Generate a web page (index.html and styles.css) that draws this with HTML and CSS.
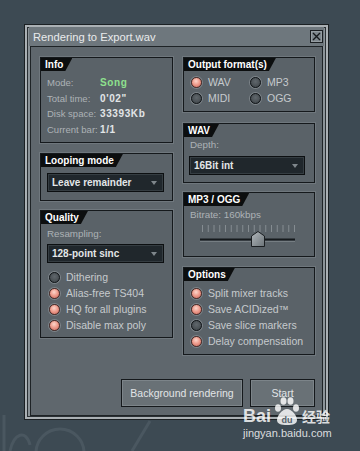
FILE: index.html
```html
<!doctype html>
<html lang="en">
<head>
    <meta charset="UTF-8">
    <meta name="viewport" content="width=device-width, initial-scale=1.0">
    <title>Rendering to Export.wav</title>
    <link rel="stylesheet" href="styles.css">
</head>
<body>
<svg class="bg-deco" width="180" height="36" viewBox="0 0 180 36">
    <path d="M4 0 V36" />
    <path d="M10 36 C 14 18, 26 14, 30 30" />
    <circle cx="60" cy="38" r="24" />
    <path d="M132 36 L 150 6" />
</svg>

<div class="window">
    <div class="title-bar">
        <span class="title">Rendering to Export.wav</span>
        <span class="close-btn">
            <svg width="9" height="9" viewBox="0 0 9 9"><path d="M1 1 L8 8 M8 1 L1 8" /></svg>
        </span>
    </div>

    <div class="panel">
        <div class="columns">
            <div class="col">
                <div class="group group-info">
                    <div class="tab">Info</div>
                    <div class="info-rows">
                        <div class="info-row"><span class="info-label">Mode:</span><span class="info-value green">Song</span></div>
                        <div class="info-row"><span class="info-label">Total time:</span><span class="info-value">0'02"</span></div>
                        <div class="info-row"><span class="info-label">Disk space:</span><span class="info-value">33393Kb</span></div>
                        <div class="info-row"><span class="info-label">Current bar:</span><span class="info-value">1/1</span></div>
                    </div>
                </div>

                <div class="group group-loop">
                    <div class="tab">Looping mode</div>
                    <div class="dropdown dd-loop"><span>Leave remainder</span><i class="arrow"></i></div>
                </div>

                <div class="group group-quality">
                    <div class="tab">Quality</div>
                    <div class="field-label">Resampling:</div>
                    <div class="dropdown dd-resample"><span>128-point sinc</span><i class="arrow"></i></div>
                    <div class="radio-list quality-list">
                        <div class="radio-row"><span class="radio"></span>Dithering</div>
                        <div class="radio-row"><span class="radio on"></span>Alias-free TS404</div>
                        <div class="radio-row"><span class="radio on"></span>HQ for all plugins</div>
                        <div class="radio-row"><span class="radio on"></span>Disable max poly</div>
                    </div>
                </div>
            </div>

            <div class="col">
                <div class="group group-output">
                    <div class="tab">Output format(s)</div>
                    <div class="format-grid">
                        <div class="radio-row"><span class="radio on"></span>WAV</div>
                        <div class="radio-row"><span class="radio"></span>MP3</div>
                        <div class="radio-row"><span class="radio"></span>MIDI</div>
                        <div class="radio-row"><span class="radio"></span>OGG</div>
                    </div>
                </div>

                <div class="group group-wav">
                    <div class="tab">WAV</div>
                    <div class="field-label depth-label">Depth:</div>
                    <div class="dropdown dd-depth"><span>16Bit int</span><i class="arrow"></i></div>
                </div>

                <div class="group group-mp3">
                    <div class="tab">MP3 / OGG</div>
                    <div class="field-label bitrate-label">Bitrate: 160kbps</div>
                    <svg class="slider" width="130" height="28" viewBox="0 0 130 28">
                        <g class="ticks">
                            <path d="M18.5 3 V10 M24.25 3 V10 M30 3 V10 M35.75 3 V10 M41.5 3 V10 M47.25 3 V10 M53 3 V10 M58.75 3 V10 M64.5 3 V10 M70.25 3 V10 M76 3 V10 M81.75 3 V10 M87.5 3 V10 M93.25 3 V10 M99 3 V10 M104.75 3 V10 M110.5 3 V10" />
                        </g>
                        <path class="track" d="M16 17.5 H111" />
                        <path class="track-hi" d="M16 19.5 H111" />
                        <defs>
                            <linearGradient id="thumb-g" x1="0" y1="0" x2="1" y2="1">
                                <stop offset="0" stop-color="#b3b9bd" />
                                <stop offset="1" stop-color="#6b7378" />
                            </linearGradient>
                        </defs>
                        <path class="thumb" d="M67.5 14 L74 9.5 L80.5 14 V24.5 H67.5 Z" fill="url(#thumb-g)" />
                    </svg>
                </div>

                <div class="group group-options">
                    <div class="tab">Options</div>
                    <div class="radio-list options-list">
                        <div class="radio-row"><span class="radio on"></span>Split mixer tracks</div>
                        <div class="radio-row"><span class="radio on"></span>Save ACIDized™</div>
                        <div class="radio-row"><span class="radio"></span>Save slice markers</div>
                        <div class="radio-row"><span class="radio on"></span>Delay compensation</div>
                    </div>
                </div>
            </div>
        </div>

        <div class="button-row">
            <div class="btn btn-bg">Background rendering</div>
            <div class="btn btn-start">Start</div>
        </div>
    </div>
</div>

<div class="watermark">
    <div class="wm-brand">
        <span class="wm-bai">Bai</span>
        <svg class="wm-paw" width="26" height="28" viewBox="0 0 26 28">
            <ellipse cx="4" cy="11" rx="3" ry="3.8" />
            <ellipse cx="9.5" cy="4" rx="3" ry="3.8" />
            <ellipse cx="16.5" cy="4" rx="3" ry="3.8" />
            <ellipse cx="22" cy="11" rx="3" ry="3.8" />
            <path d="M13 12 C 8 12, 3 19, 3 23 C 3 27, 7 28, 13 28 C 19 28, 23 27, 23 23 C 23 19, 18 12, 13 12 Z" />
            <text x="13" y="25.5" text-anchor="middle">du</text>
        </svg>
        <span class="wm-cn">经验</span>
    </div>
    <div class="wm-url">jingyan.baidu.com</div>
</div>
</body>
</html>
```

FILE: styles.css
```css
body {
    margin: 0;
    padding: 24px 0 0 24px;
    width: 360px;
    height: 451px;
    box-sizing: border-box;
    overflow: hidden;
    position: relative;
    background-color: #3d4a53;
    font-family: "Liberation Sans", Arial, sans-serif;
}

.bg-deco {
    position: absolute;
    left: 0;
    top: 415px;
    fill: none;
    stroke: #4a5760;
    stroke-width: 3;
}

/* window frame */
.window {
    position: relative;
    width: 305px;
    height: 396px;
    box-sizing: border-box;
    padding: 2px 4px 3px;
    border: 1px solid #1b2023;
    background-color: #8b9398;
    box-shadow: inset 0 0 0 2px #aab0b4, inset 0 0 0 3px #2a3034;
}
.title-bar {
    height: 19px;
    display: flex;
    align-items: center;
    justify-content: space-between;
    padding: 0 1px 0 4px;
    background-color: #6e777d;
}
.title {
    color: #e9ebec;
    font-size: 11.2px;
}
.close-btn {
    width: 13px;
    height: 13px;
    box-sizing: border-box;
    display: flex;
    align-items: center;
    justify-content: center;
    border: 1px solid #1b1f22;
    background-color: #7f888e;
    box-shadow: inset 0 0 0 1px #959da2;
}
.close-btn svg {
    stroke: #15191c;
    stroke-width: 1.4;
}

/* panel */
.panel {
    height: 370px;
    margin: 0 1px;
    box-sizing: border-box;
    padding: 10px 7px 0 9px;
    border: 1px solid #1e2326;
    background-color: #5f676d;
}
.columns {
    display: grid;
    grid-template-columns: 133px 132px;
    column-gap: 10px;
    align-items: start;
}
.col {
    display: flex;
    flex-direction: column;
}

.group {
    box-sizing: border-box;
    border: 1px solid #15191c;
    background-color: #5a6268;
    box-shadow: 0 0 0 1px #6f777d;
}
.group-info { height: 86px; }
.group-loop { height: 48px; margin-top: 10px; }
.group-quality { height: 128px; margin-top: 9px; }
.group-output { height: 55px; }
.group-wav { height: 60px; margin-top: 11px; }
.group-mp3 { height: 65px; margin-top: 9px; }
.group-options { height: 88px; margin-top: 10px; }

.tab {
    width: fit-content;
    height: 13px;
    line-height: 13px;
    padding: 0 9px 0 4px;
    color: #ffffff;
    font-size: 10px;
    font-weight: bold;
    background-color: #0c0e0f;
    clip-path: polygon(0 0, 100% 0, calc(100% - 7px) 100%, 0 100%);
}

/* info */
.info-rows {
    margin-top: 4px;
    padding-left: 6px;
}
.info-row {
    display: flex;
    line-height: 15.6px;
    height: 15.6px;
    white-space: nowrap;
}
.info-label {
    width: 53px;
    flex-shrink: 0;
    color: #adb2b6;
    font-size: 9.5px;
}
.info-value {
    color: #e2e5e7;
    font-size: 10px;
    font-weight: bold;
    letter-spacing: 0.6px;
}
.info-value.green {
    color: #8ee08e;
}

.field-label {
    margin-top: 3px;
    padding-left: 6px;
    height: 14px;
    line-height: 14px;
    color: #adb2b6;
    font-size: 9.8px;
}
.depth-label {
    margin-top: 1px;
}
.bitrate-label {
    margin-top: 2px;
}

/* dropdowns */
.dropdown {
    height: 19px;
    box-sizing: border-box;
    display: flex;
    align-items: center;
    justify-content: space-between;
    padding: 0 4px 0 4px;
    border: 1px solid #0c0f11;
    background-color: #20272c;
    box-shadow: inset 0 0 0 1px #353d42;
    color: #e3e6e8;
    font-size: 10px;
    font-weight: bold;
}
.dd-loop {
    margin: 6px 0 0 6px;
    width: 117px;
}
.dd-resample {
    margin: 3px 0 0 6px;
    width: 117px;
}
.dd-depth {
    margin: 4px 0 0 5px;
    width: 116px;
}
.arrow {
    width: 0;
    height: 0;
    border-left: 3.5px solid transparent;
    border-right: 3.5px solid transparent;
    border-top: 4px solid #7f878c;
    margin-right: 2px;
}

/* radios */
.radio-row {
    display: flex;
    align-items: center;
    gap: 6px;
    height: 16px;
    color: #c6cacd;
    font-size: 10.5px;
}
.radio {
    width: 11px;
    height: 11px;
    box-sizing: border-box;
    border-radius: 50%;
    border: 1px solid #111518;
    background: radial-gradient(circle at 50% 40%, #60676c 0, #3c4246 100%);
    box-shadow: 0 0 0 1px #7d8489;
}
.radio.on {
    border-color: #4b2c28;
    background: radial-gradient(circle at 45% 35%, #fcd6cb 0, #ee9d8e 45%, #c8655a 100%);
}
.quality-list {
    margin-top: 6px;
    padding-left: 8px;
}
.options-list {
    margin-top: 4px;
    padding-left: 7px;
}
.format-grid {
    margin-top: 3px;
    padding-left: 7px;
    display: grid;
    grid-template-columns: 59px auto;
}

/* slider */
.slider {
    display: block;
}
.ticks {
    stroke: #858c91;
    stroke-width: 1;
}
.track {
    stroke: #15191c;
    stroke-width: 2;
}
.track-hi {
    stroke: #767e83;
    stroke-width: 1;
}
.thumb {
    stroke: #1b1f22;
    stroke-width: 1;
}

/* buttons */
.button-row {
    display: flex;
    justify-content: flex-end;
    gap: 7px;
    margin-top: 24px;
}
.btn {
    height: 28px;
    box-sizing: border-box;
    display: flex;
    align-items: center;
    justify-content: center;
    border: 1px solid #15191c;
    background-color: #697176;
    box-shadow: inset 0 0 0 1px #7c8489;
    color: #e2e5e7;
    font-size: 10.5px;
}
.btn-bg {
    width: 122px;
}
.btn-start {
    width: 65px;
}

/* watermark overlay */
.watermark {
    position: absolute;
    left: 243px;
    top: 397px;
    color: rgba(255, 255, 255, 0.82);
}
.wm-brand {
    display: flex;
    align-items: flex-end;
    height: 28px;
}
.wm-bai {
    font-size: 18px;
    font-weight: bold;
    line-height: 17px;
    width: 31px;
}
.wm-paw {
    fill: rgba(255, 255, 255, 0.82);
}
.wm-paw text {
    fill: #56616a;
    font-family: "Liberation Sans", Arial, sans-serif;
    font-size: 9px;
    font-weight: bold;
}
.wm-cn {
    margin-left: 2px;
    font-family: "Noto Sans CJK SC", sans-serif;
    font-size: 14px;
    font-weight: bold;
    line-height: 17px;
}
.wm-url {
    margin-top: 2px;
    font-size: 11px;
    line-height: 12px;
}
```
